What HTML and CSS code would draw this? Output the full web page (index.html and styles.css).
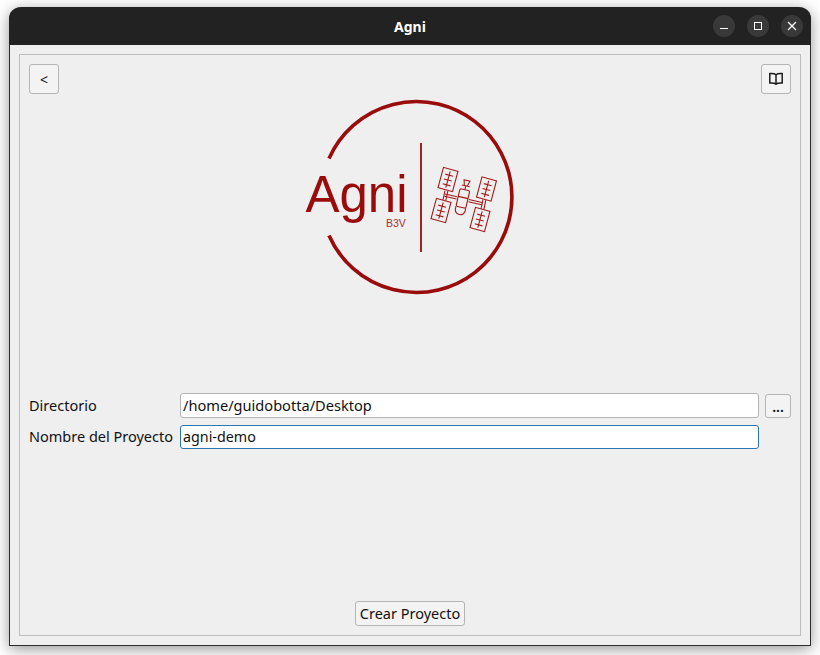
FILE: index.html
```html
<!DOCTYPE html>
<html lang="es">
<head>
<meta charset="utf-8">
<title>Agni</title>
<link rel="stylesheet" href="styles.css">
</head>
<body>
<div class="window">
  <header class="titlebar">
    <span></span>
    <span class="title">Agni</span>
    <div class="controls">
      <span class="ctl"><svg width="22" height="22" viewBox="0 0 22 22"><path d="M7 13.500h8" class="ctl-stroke"/></svg></span>
      <span class="ctl"><svg width="22" height="22" viewBox="0 0 22 22"><rect x="7.500" y="7.500" width="7" height="7" class="ctl-stroke"/></svg></span>
      <span class="ctl"><svg width="22" height="22" viewBox="0 0 22 22"><path d="M7 7l8 8M15 7l-8 8" class="ctl-stroke x"/></svg></span>
    </div>
  </header>
  <main class="frame">
    <div class="toprow">
      <button class="btn square">&lt;</button>
      <button class="btn square" aria-label="Documentación">
        <svg width="14" height="14" viewBox="0 0 14 14" class="book"><path d="M7 2.800C6 1.800 4 1.400 .8 1.600V11C4 10.800 6 11.100 7 12.200 8 11.100 10 10.800 13.200 11V1.600C10 1.400 8 1.800 7 2.800ZM7 2.800V12.800"/></svg>
      </button>
    </div>
    <div class="logo">
      <svg width="220" height="200" viewBox="300 97 220 200">
        <g class="lg-line">
          <path d="M329 158.500A95.500 95.500 0 1 1 329 235.500" class="ring"/>
          <path d="M421 143V252" class="divider"/>
          <g class="sat">
            <g transform="rotate(15 448 179.500)"><rect x="440.500" y="169" width="15" height="21"/><path d="M448 171v17M444 175h8M444 180h8M444 185h8"/></g>
            <g transform="rotate(15 441 210.500)"><rect x="433.500" y="200" width="15" height="21"/><path d="M441 202v17M437 206h8M437 211h8M437 216h8"/></g>
            <g transform="rotate(15 486.500 189)"><rect x="479" y="178.500" width="15" height="21"/><path d="M486.500 180.500v17M482.500 184.500h8M482.500 189.500h8M482.500 194.500h8"/></g>
            <g transform="rotate(15 480 219.500)"><rect x="472.500" y="209" width="15" height="21"/><path d="M480 211v17M476 215h8M476 220h8M476 225h8"/></g>
            <path d="M445 194l12 2.800M444.500 196.200l12 2.800M469 199.500l14 3.300M468.500 201.700l14 3.300M445 190.500l-2 9.500M447.800 191l-2 9.500M483 199.500l-2 9.500M485.800 200.200l-2 9.500"/>
            <g transform="rotate(13 463 198)">
              <rect x="458" y="189.500" width="10" height="18" rx="1.500"/>
              <path d="M458 197.500h10M458 207.500v2.500a5 5 0 0 0 10 0v-2.500M463 189.500v-4M459 185.500h8M460 180h6l-1.500 5.500h-3Z"/>
            </g>
          </g>
        </g>
        <text x="305.500" y="212" class="lg-name" textLength="102">Agni</text>
        <text x="386" y="226.500" class="lg-sub">B3V</text>
      </svg>
    </div>
    <div class="form">
      <div class="row">
        <label class="lbl">Directorio</label>
        <div class="field">/home/guidobotta/Desktop</div>
        <button class="btn dots">...</button>
      </div>
      <div class="row">
        <label class="lbl">Nombre del Proyecto</label>
        <div class="field focus">agni-demo</div>
        <span class="dots-gap"></span>
      </div>
    </div>
    <div class="bottom">
      <button class="btn create">Crear Proyecto</button>
    </div>
  </main>
</div>
</body>
</html>
```
FILE: styles.css
```css
* { box-sizing: border-box; }
html, body { margin: 0; height: 100%; }
body {
  width: 820px;
  height: 655px;
  overflow: hidden;
  background: #fff;
  padding: 7px 9px 9px;
  font-family: "Noto Sans", "Open Sans", sans-serif;
  font-size: 14px;
  color: #111;
}
.window {
  display: flex;
  flex-direction: column;
  height: 639px;
  background: #efefef;
  border: 1px solid #2c2c2c;
  border-top: 0;
  border-radius: 12px 12px 0 0;
  box-shadow: 0 3px 15px rgba(0, 0, 0, .42);
}
.titlebar {
  display: grid;
  grid-template-columns: 1fr auto 1fr;
  align-items: center;
  height: 38px;
  margin: 0 -1px;
  padding: 0 8px;
  flex: none;
  background: #222;
  border-radius: 12px 12px 0 0;
}
.title { color: #fff; font-weight: 700; font-size: 14px; }
.controls { display: flex; justify-content: flex-end; gap: 12px; }
.ctl { display: block; width: 22px; height: 22px; border-radius: 50%; background: #393939; }
.ctl svg { display: block; }
.ctl-stroke { fill: none; stroke: #fff; stroke-width: 1; }
.ctl-stroke.x { stroke-width: 1.300; }
.frame {
  flex: 1;
  display: flex;
  flex-direction: column;
  margin: 9px;
  padding: 9px;
  border: 1px solid #bdbdbd;
}
.toprow { display: flex; justify-content: space-between; flex: none; }
.btn {
  display: block;
  padding: 0;
  font: inherit;
  color: #111;
  background: #f3f3f3;
  border: 1px solid #b4b4b4;
  border-radius: 3px;
}
.square { width: 30px; height: 30px; display: flex; align-items: center; justify-content: center; }
.book { fill: none; stroke: #1c1c1c; stroke-width: 1.500; }
.logo { flex: none; height: 200px; margin-top: 3px; display: flex; justify-content: center; }
.lg-line { fill: none; stroke: #9a0b0b; }
.ring { stroke-width: 3.600; }
.divider { stroke-width: 1.800; }
.sat { stroke-width: 1.100; stroke: #a31a1a; }
.lg-name { font-family: "Liberation Sans", Arial, sans-serif; font-size: 51px; fill: #9a0b0b; }
.lg-sub { font-family: "Liberation Sans", Arial, sans-serif; font-size: 10.500px; fill: #a93030; }
.form {
  flex: none;
  display: flex;
  flex-direction: column;
  gap: 6px;
  margin-top: 96px;
}
.row { display: flex; align-items: center; height: 25px; }
.lbl { width: 151px; flex: none; font-size: 14.500px; padding-bottom: 1px; }
.field {
  flex: 1;
  height: 25px;
  padding: 0 2px;
  line-height: 23px;
  font-size: 14.600px;
  background: #fff;
  border: 1px solid #b4b4b4;
  border-radius: 3px;
  white-space: nowrap;
}
.field.focus { border-color: #2a76b0; height: 24px; line-height: 21px; font-size: 14.300px; }
.dots { width: 26px; height: 24px; margin-left: 6px; flex: none; line-height: 24px; font-weight: 600; }
.dots-gap { width: 32px; flex: none; }
.bottom { margin-top: auto; display: flex; justify-content: center; }
.create { width: 110px; height: 25px; font-size: 14.500px; line-height: 23px; white-space: nowrap; }
```
